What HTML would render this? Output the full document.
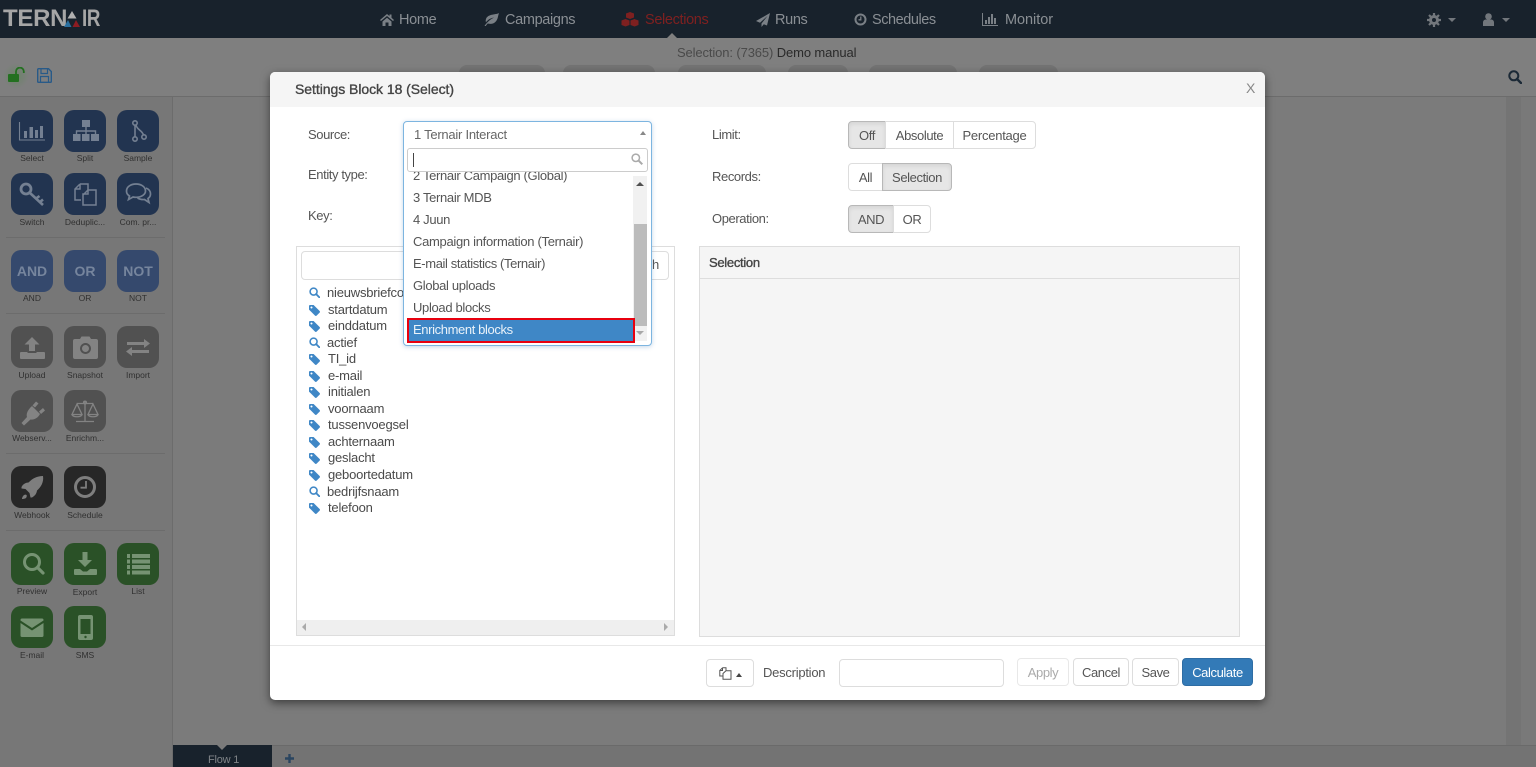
<!DOCTYPE html>
<html><head><meta charset="utf-8"><title>Ternair</title>
<style>
html,body{margin:0;padding:0;width:1536px;height:767px;overflow:hidden;background:#7c7c7c}
body{position:relative;font-family:"Liberation Sans",sans-serif;font-size:13px;letter-spacing:-.4px;color:#555}
div,span,svg{position:absolute;box-sizing:border-box}
span.t{white-space:nowrap;line-height:20px;height:20px;margin-top:1px}
span.t b,span.t i{position:static;font-style:normal;font-weight:normal}
.nav{font-size:14.5px;letter-spacing:-.35px;color:#8a8f94}
.tile{width:42px;height:42px;border-radius:10px}
.tile svg{left:0;top:0;width:42px;height:42px}
.b{background:#223450;color:#748092}
.l{background:#35496d;color:#76859d;font-weight:bold;font-size:14px;letter-spacing:0;text-align:center;line-height:42px}
.g{background:#515151;color:#838383}
.k{background:#272727;color:#7e7e7e}
.n{background:#2a5127;color:#769373}
.lab{font-size:8.5px;letter-spacing:0;color:#303030;width:60px;text-align:center;white-space:nowrap;line-height:12px;height:12px}
.sep{left:6px;width:159px;height:1px;background:#6c6c6c}
.btn{border:1px solid #ddd;background:#fff;color:#555;text-align:center;line-height:27px;white-space:nowrap}
.on{background:#e6e6e6;border-color:#b8b8b8;box-shadow:inset 0 2px 4px rgba(0,0,0,.08)}
.it{color:#555;font-size:13px}
.f{color:#4a4a4a;font-size:13px;letter-spacing:-.2px}
.d{color:#555;letter-spacing:-.33px}
.tag{width:11px;height:11px;left:309px}
</style></head><body>
<svg width="0" height="0" style="position:absolute"><defs>
<symbol id="tag" viewBox="0 0 12 12"><path fill="#3f87c6" d="M0 1.2C0 .5.5 0 1.2 0H5l6.6 6.6c.5.5.5 1.2 0 1.7l-3.3 3.3c-.5.5-1.2.5-1.7 0L0 5zM2.7 1.6a1.1 1.1 0 1 0 .01 0z"/></symbol>
<symbol id="mag" viewBox="0 0 12 12"><circle cx="5" cy="5" r="3.8" fill="none" stroke="#3f87c6" stroke-width="1.7"/><path d="M7.800 7.800l3.400 3.400" stroke="#3f87c6" stroke-width="2" stroke-linecap="round"/></symbol>
</defs></svg>

<!-- top bar -->
<div style="left:0;top:0;width:1536px;height:38px;background:#18222c"></div>
<span class="t" style="left:3px;top:7px;font-size:24px;font-weight:bold;letter-spacing:-.3px;color:#a6a6a6;line-height:22px">TERN</span>
<svg style="left:0;top:0" width="110" height="38" viewBox="0 0 110 38"><path d="M72 11l4.500 7.500h-9z" fill="#b0b0b0"/><path d="M68 20l3.500 7H64z" fill="#2a6f9f"/><path d="M76 20l4 7h-7.500z" fill="#8c1c22"/></svg>
<span class="t" style="left:82px;top:7px;font-size:24px;font-weight:bold;letter-spacing:-.4px;color:#a6a6a6;line-height:22px;transform:scaleX(.78);transform-origin:0 0">IR</span>

<svg style="left:380px;top:13px" width="14" height="13" viewBox="0 0 14 13"><path fill="#7a8086" d="M7 1L0 7l1 1 6-5 6 5 1-1-2.500-2.200V1.500h-2v1.600zM2.500 8.500L7 4.700l4.500 3.800V13H8.500V9.500h-3V13h-3z"/></svg>
<span class="t nav" style="left:399px;top:9px">Home</span>
<svg style="left:484px;top:13px" width="15" height="13" viewBox="0 0 15 13"><path fill="#7a8086" d="M15 0C12 2 4 .5 2 6c-.5 1.500-.3 2.500 0 3.300C4 6.500 7 5 10 4.500 7 6 3.500 8.500.5 13h1.300c.6-1 1.300-2 2-2.500 6 1.500 9-2 10-6 .3-1.500.7-3 1.200-4.500z"/></svg>
<span class="t nav" style="left:505px;top:9px">Campaigns</span>
<svg style="left:621px;top:12px" width="18" height="15" viewBox="0 0 18 15"><g fill="#7e2020"><path d="M9 0l4 1.500v4L9 7 5 5.500v-4z"/><path d="M4.500 7l4 1.500v4.500l-4 1.500-4-1.500V8.500z"/><path d="M13.500 7l4 1.500v4.500l-4 1.500-4-1.500V8.500z"/></g></svg>
<span class="t nav" style="left:645px;top:9px;color:#7e2020">Selections</span>
<svg style="left:756px;top:13px" width="14" height="14" viewBox="0 0 14 14"><path fill="#7a8086" d="M14 0L0 8l4 1.700L11.500 3 5.500 10.500V14l2.300-2.800L11 12.500z"/></svg>
<span class="t nav" style="left:775px;top:9px">Runs</span>
<svg style="left:854px;top:13px" width="13" height="13" viewBox="0 0 13 13"><circle cx="6.500" cy="6.500" r="5" fill="none" stroke="#7a8086" stroke-width="2"/><path d="M6.800 3.500v3.300H4.500" fill="none" stroke="#7a8086" stroke-width="1.300"/></svg>
<span class="t nav" style="left:872px;top:9px;letter-spacing:-.45px">Schedules</span>
<svg style="left:982px;top:13px" width="16" height="13" viewBox="0 0 16 13"><path fill="#7a8086" d="M0 0h1v12h15v1H0zM3 7h2v4H3zM6 4h2v7H6zM9 1h2v10H9zM12 5h2v6h-2z"/></svg>
<span class="t nav" style="left:1005px;top:9px;letter-spacing:-.05px">Monitor</span>
<div style="left:667px;top:33px;width:0;height:0;border:5px solid transparent;border-top:0;border-bottom:5px solid #7f7f7f"></div>

<svg style="left:1427px;top:13px" width="14" height="14" viewBox="0 0 14 14"><circle cx="7" cy="7" r="3.500" fill="none" stroke="#72777c" stroke-width="3"/><path d="M7 0v3M7 11v3M0 7h3M11 7h3M2 2l2 2M10 10l2 2M12 2l-2 2M4 10l-2 2" stroke="#72777c" stroke-width="2.200"/></svg>
<div style="left:1448px;top:18px;width:0;height:0;border:4px solid transparent;border-bottom:0;border-top:4px solid #72777c"></div>
<svg style="left:1483px;top:13px" width="11" height="13" viewBox="0 0 11 13"><circle cx="5.500" cy="3.500" r="3.300" fill="#72777c"/><path d="M0 13V9.500C0 7.500 1.500 6.500 3 6.500h5c1.500 0 3 1 3 3V13z" fill="#72777c"/></svg>
<div style="left:1502px;top:18px;width:0;height:0;border:4px solid transparent;border-bottom:0;border-top:4px solid #72777c"></div>

<!-- sub header -->
<div style="left:0;top:38px;width:1536px;height:58px;background:#7f7f7f"></div>
<div style="left:0;top:96px;width:1536px;height:1px;background:#6c6c6c"></div>
<span class="t" style="left:677px;top:42px;color:#4a4a4a;letter-spacing:-.12px">Selection: (7365) <b style="color:#2a2a2a">Demo manual</b></span>
<div style="left:459px;top:65px;width:86px;height:8px;background:#737373;border-radius:8px 8px 0 0"></div>
<div style="left:563px;top:65px;width:92px;height:8px;background:#737373;border-radius:8px 8px 0 0"></div>
<div style="left:678px;top:65px;width:88px;height:8px;background:#737373;border-radius:8px 8px 0 0"></div>
<div style="left:788px;top:65px;width:60px;height:8px;background:#737373;border-radius:8px 8px 0 0"></div>
<div style="left:869px;top:65px;width:88px;height:8px;background:#737373;border-radius:8px 8px 0 0"></div>
<div style="left:979px;top:65px;width:79px;height:8px;background:#737373;border-radius:8px 8px 0 0"></div>

<div style="left:3px;top:63px;width:26px;height:26px;border-radius:50%;background:radial-gradient(circle,rgba(60,140,50,.3),rgba(60,140,50,0) 70%)"></div>
<svg style="left:8px;top:67px" width="17" height="15" viewBox="0 0 17 15"><rect x="0" y="7" width="11" height="8" rx="1" fill="#237020"/><path d="M8 7V4.500a3.500 3.500 0 0 1 7.800 0V6" fill="none" stroke="#237020" stroke-width="1.800"/></svg>
<svg style="left:37px;top:68px" width="15" height="15" viewBox="0 0 15 15"><path d="M1.500.7h10l2.800 2.800v10a.8.800 0 0 1-.8.800h-12a.8.800 0 0 1-.8-.8V1.500a.8.800 0 0 1 .8-.8z" fill="none" stroke="#285a88" stroke-width="1.400"/><path d="M4 1v4.500h6.500V1M3.500 14V8.500h8V14" fill="none" stroke="#285a88" stroke-width="1.200"/></svg>
<svg style="left:1508px;top:70px" width="14" height="14" viewBox="0 0 14 14"><circle cx="5.800" cy="5.800" r="4.500" fill="none" stroke="#1b2936" stroke-width="2"/><path d="M9 9l4 4" stroke="#1b2936" stroke-width="2.400" stroke-linecap="round"/></svg>

<!-- body areas -->
<div style="left:0;top:97px;width:172px;height:670px;background:#777"></div>
<div style="left:172px;top:97px;width:1px;height:670px;background:#6c6c6c"></div>
<div style="left:173px;top:97px;width:1333px;height:648px;background:#7b7b7b"></div>
<div style="left:1506px;top:97px;width:15px;height:648px;background:#747474"></div>
<div style="left:1521px;top:97px;width:15px;height:648px;background:#797979"></div>
<div style="left:173px;top:745px;width:1363px;height:22px;background:#737373;border-top:1px solid #6a6a6a"></div>
<div style="left:173px;top:745px;width:99px;height:22px;background:#18222c"></div>
<div style="left:217px;top:745px;width:0;height:0;border:5px solid transparent;border-bottom:0;border-top:5px solid #7b7b7b"></div>
<span class="t" style="left:208px;top:749px;color:#7f8387;font-size:11px;letter-spacing:-.2px">Flow 1</span>
<svg style="left:285px;top:754px" width="9" height="9" viewBox="0 0 9 9"><path d="M4.500 0v9M0 4.500h9" stroke="#2a4560" stroke-width="2.400"/></svg>

<!-- tiles -->
<div class="tile b" style="left:11px;top:110px"><svg viewBox="0 0 42 42"><path d="M8.500 12v18H34" fill="none" stroke="currentColor" stroke-width="1.100"/><path fill="currentColor" d="M13 21h3v7h-3zM18.500 17H22v11h-3.500zM24 20h3v8h-3zM29 16h3v12h-3z"/></svg></div>
<div class="lab" style="left:2px;top:152px">Select</div>
<div class="tile b" style="left:64px;top:110px"><svg viewBox="0 0 42 42"><path fill="currentColor" d="M18 10h8v7h-8zM9 24h7.500v7H9zM18 24h7.500v7H18zM27 24h8v7h-8z"/><path d="M22 17v4M12.500 24v-3h19v3M22 21v3" fill="none" stroke="currentColor" stroke-width="1.400"/></svg></div>
<div class="lab" style="left:55px;top:152px">Split</div>
<div class="tile b" style="left:117px;top:110px"><svg viewBox="0 0 42 42"><g fill="none" stroke="currentColor" stroke-width="1.600"><circle cx="18" cy="13" r="2.200"/><circle cx="18" cy="29" r="2.200"/><circle cx="27" cy="27" r="2.200"/><path d="M18 15.200v11.600M19 15c1 5 6 5 7.500 10"/></g></svg></div>
<div class="lab" style="left:108px;top:152px">Sample</div>

<div class="tile b" style="left:11px;top:173px"><svg viewBox="0 0 42 42"><circle cx="15" cy="16" r="5" fill="none" stroke="currentColor" stroke-width="2.800"/><path d="M19 20l13 12M25 25.500l3.500-2.500M29 29l3-2.500" fill="none" stroke="currentColor" stroke-width="2.600"/></svg></div>
<div class="lab" style="left:2px;top:216px">Switch</div>
<div class="tile b" style="left:64px;top:173px"><svg viewBox="0 0 42 42"><g fill="none" stroke="currentColor" stroke-width="1.500"><path d="M16 11h8v6M16 11l-5 5v11h6"/><path d="M24 17h8v15H19V22zM19 22v-1h5v-4"/><path d="M16 11v5h-5"/></g></svg></div>
<div class="lab" style="left:55px;top:216px">Deduplic...</div>
<div class="tile b" style="left:117px;top:173px"><svg viewBox="0 0 42 42"><g fill="none" stroke="currentColor" stroke-width="1.700"><path d="M19 11c-5.500 0-9.500 3-9.500 7 0 2 1 3.800 3 5l-1 3.500 4.500-2.500c1 .2 2 .3 3 .3 5.500 0 9.500-3 9.500-6.300 0-4-4-7-9.500-7z"/><path d="M29 15c2.500 1 4.500 3 4.500 6 0 2-1 3.500-2.500 4.500l1 4-4.500-3c-2.500.2-5-.3-7-1.500"/></g></svg></div>
<div class="lab" style="left:108px;top:216px">Com. pr...</div>
<div class="sep" style="top:237px"></div>

<div class="tile l" style="left:11px;top:250px">AND</div><div class="lab" style="left:2px;top:292px">AND</div>
<div class="tile l" style="left:64px;top:250px">OR</div><div class="lab" style="left:55px;top:292px">OR</div>
<div class="tile l" style="left:117px;top:250px">NOT</div><div class="lab" style="left:108px;top:292px">NOT</div>
<div class="sep" style="top:313px"></div>

<div class="tile g" style="left:11px;top:326px"><svg viewBox="0 0 42 42"><path fill="currentColor" d="M21 11l7.500 7.500h-4.500V25h-6v-6.500H13.500zM10 26h6.500v1h9v-1H33a1 1 0 0 1 1 1v5a1 1 0 0 1-1 1H10a1 1 0 0 1-1-1v-5a1 1 0 0 1 1-1z"/></svg></div>
<div class="lab" style="left:2px;top:369px">Upload</div>
<div class="tile g" style="left:64px;top:326px"><svg viewBox="0 0 42 42"><path fill="currentColor" fill-rule="evenodd" d="M16 13l1.500-2.500h8L27 13h5a2 2 0 0 1 2 2v16a2 2 0 0 1-2 2H11a2 2 0 0 1-2-2V15a2 2 0 0 1 2-2zM21.500 17a5.500 5.500 0 1 0 .01 0zM21.500 19a3.500 3.500 0 1 1-.01 0z"/></svg></div>
<div class="lab" style="left:55px;top:369px">Snapshot</div>
<div class="tile g" style="left:117px;top:326px"><svg viewBox="0 0 42 42"><path fill="currentColor" d="M10 16h17v-3l6 4.500-6 4.500v-3H10zM32 24H15v-3l-6 4.500 6 4.500v-3h17z"/></svg></div>
<div class="lab" style="left:108px;top:369px">Import</div>

<div class="tile g" style="left:11px;top:390px"><svg viewBox="0 0 42 42"><path fill="currentColor" d="M21 16l8 8c-2 4-6 6-9.500 5.500L13 35.500 10.500 33l5.500-6c-1-3 .5-7 5-11zM25 11.500l2.500 2-3.500 4-2.500-2zM32 18l2 2.500-4 3.500-2-2.500z"/></svg></div>
<div class="lab" style="left:2px;top:432px">Webserv...</div>
<div class="tile g" style="left:64px;top:390px"><svg viewBox="0 0 42 42"><g fill="none" stroke="currentColor" stroke-width="1.300"><path d="M21 11v20M12 31.500h18M13 13.500h16"/><circle cx="21" cy="12.500" r="1.400"/><path d="M13 14l-5 10.500h10zM29 14l-5 10.500h10z"/><path d="M8 24.500c1 3 9 3 10 0M24 24.500c1 3 9 3 10 0"/></g></svg></div>
<div class="lab" style="left:55px;top:432px">Enrichm...</div>
<div class="sep" style="top:453px"></div>

<div class="tile k" style="left:11px;top:466px"><svg viewBox="0 0 42 42"><path fill="currentColor" d="M32 10c1 6-2 11-6 14.500-.3 2.500-1.500 5-5 7l-1.500 0-1-4.500-4-4-4-.5v-1.500c1.500-3 4.500-4.500 7-4.500C21.500 12.500 26 10 32 10zM12.500 29.500c1-1 2.500-1 3-.5s.3 2-.5 3c-1 .8-3 1-4 1 0-1 .5-2.500 1.500-3.500z"/></svg></div>
<div class="lab" style="left:2px;top:509px">Webhook</div>
<div class="tile k" style="left:64px;top:466px"><svg viewBox="0 0 42 42"><circle cx="21" cy="21" r="9.500" fill="none" stroke="currentColor" stroke-width="3"/><path d="M22 15v6.700h-5.500" fill="none" stroke="currentColor" stroke-width="1.800"/></svg></div>
<div class="lab" style="left:55px;top:509px">Schedule</div>
<div class="sep" style="top:530px"></div>

<div class="tile n" style="left:11px;top:543px"><svg viewBox="0 0 42 42"><circle cx="21" cy="19" r="7.500" fill="none" stroke="currentColor" stroke-width="3"/><path d="M26.500 24.500l5.500 5.500" stroke="currentColor" stroke-width="3.200" stroke-linecap="round"/></svg></div>
<div class="lab" style="left:2px;top:585px">Preview</div>
<div class="tile n" style="left:64px;top:543px"><svg viewBox="0 0 42 42"><path fill="currentColor" d="M18.500 9h5v8h4.500l-7 7-7-7h4.500zM11 26h5l3 2.500h4l3-2.500h6a1 1 0 0 1 1 1v4a1 1 0 0 1-1 1H11a1 1 0 0 1-1-1v-4a1 1 0 0 1 1-1z"/></svg></div>
<div class="lab" style="left:55px;top:586px">Export</div>
<div class="tile n" style="left:117px;top:543px"><svg viewBox="0 0 42 42"><path fill="currentColor" d="M10 11h3v4h-3zM15 11h18v4H15zM10 16.500h3v4h-3zM15 16.500h18v4H15zM10 22h3v4h-3zM15 22h18v4H15zM10 27.500h3v4h-3zM15 27.500h18v4H15z"/></svg></div>
<div class="lab" style="left:108px;top:585px">List</div>

<div class="tile n" style="left:11px;top:606px"><svg viewBox="0 0 42 42"><path fill="currentColor" d="M11 12.500h20a1.500 1.500 0 0 1 1.500 1.500v.5L21 22 9.500 14.500V14a1.500 1.500 0 0 1 1.500-1.500zM9.500 17L21 24.500 32.500 17v12.500A1.500 1.500 0 0 1 31 31H11a1.500 1.500 0 0 1-1.500-1.500z"/></svg></div>
<div class="lab" style="left:2px;top:649px">E-mail</div>
<div class="tile n" style="left:64px;top:606px"><svg viewBox="0 0 42 42"><path fill="currentColor" fill-rule="evenodd" d="M16 9h11a2 2 0 0 1 2 2v21a2 2 0 0 1-2 2H16a2 2 0 0 1-2-2V11a2 2 0 0 1 2-2zM16.500 13v15h10V13zM21.500 29.800a1.200 1.200 0 1 0 .01 0z"/></svg></div>
<div class="lab" style="left:55px;top:649px">SMS</div>

<!-- modal -->
<div style="left:270px;top:72px;width:995px;height:628px;background:#fff;border-radius:5px;box-shadow:0 3px 9px rgba(0,0,0,.5)"></div>
<div style="left:270px;top:72px;width:995px;height:35px;background:#f5f5f5;border-radius:5px 5px 0 0"></div>
<span class="t" style="left:295px;top:78px;font-size:14px;letter-spacing:-.05px;color:#444;-webkit-text-stroke:.35px #444">Settings Block 18 (Select)</span>
<span class="t" style="left:1246px;top:77px;font-size:14px;color:#888;letter-spacing:0">X</span>

<span class="t it" style="left:308px;top:124px">Source:</span>
<span class="t it" style="left:308px;top:164px">Entity type:</span>
<span class="t it" style="left:308px;top:205px">Key:</span>
<span class="t it" style="left:712px;top:124px">Limit:</span>
<span class="t it" style="left:712px;top:166px">Records:</span>
<span class="t it" style="left:712px;top:208px">Operation:</span>

<!-- button groups -->
<div class="btn on" style="left:848px;top:121px;width:38px;height:28px;border-radius:4px 0 0 4px">Off</div>
<div class="btn" style="left:885px;top:121px;width:69px;height:28px">Absolute</div>
<div class="btn" style="left:953px;top:121px;width:83px;height:28px;border-radius:0 4px 4px 0;letter-spacing:-.25px">Percentage</div>
<div class="btn" style="left:848px;top:163px;width:35px;height:28px;border-radius:4px 0 0 4px">All</div>
<div class="btn on" style="left:882px;top:163px;width:70px;height:28px;border-radius:0 4px 4px 0">Selection</div>
<div class="btn on" style="left:848px;top:205px;width:46px;height:28px;border-radius:4px 0 0 4px">AND</div>
<div class="btn" style="left:893px;top:205px;width:38px;height:28px;border-radius:0 4px 4px 0">OR</div>

<!-- left panel -->
<div style="left:296px;top:246px;width:379px;height:390px;border:1px solid #ddd;background:#fff"></div>
<div style="left:301px;top:251px;width:368px;height:29px;border:1px solid #ddd;border-radius:4px;background:#fff"></div>
<span class="t" style="left:652px;top:254px;color:#555">h</span>
<div style="left:297px;top:620px;width:377px;height:15px;background:#efefef"></div>
<div style="left:302px;top:623px;width:0;height:0;border:4px solid transparent;border-left:0;border-right:4px solid #aaa"></div>
<div style="left:664px;top:623px;width:0;height:0;border:4px solid transparent;border-right:0;border-left:4px solid #aaa"></div>

<svg class="tag" style="top:287px"><use href="#mag"/></svg><span class="t f" style="left:327px;top:282px">nieuwsbriefco</span>
<svg class="tag" style="top:305px"><use href="#tag"/></svg><span class="t f" style="left:328px;top:299px">startdatum</span>
<svg class="tag" style="top:321px"><use href="#tag"/></svg><span class="t f" style="left:328px;top:315px">einddatum</span>
<svg class="tag" style="top:337px"><use href="#mag"/></svg><span class="t f" style="left:327px;top:332px">actief</span>
<svg class="tag" style="top:354px"><use href="#tag"/></svg><span class="t f" style="left:328px;top:348px">TI_id</span>
<svg class="tag" style="top:371px"><use href="#tag"/></svg><span class="t f" style="left:328px;top:365px">e-mail</span>
<svg class="tag" style="top:387px"><use href="#tag"/></svg><span class="t f" style="left:328px;top:381px">initialen</span>
<svg class="tag" style="top:404px"><use href="#tag"/></svg><span class="t f" style="left:328px;top:398px">voornaam</span>
<svg class="tag" style="top:420px"><use href="#tag"/></svg><span class="t f" style="left:328px;top:414px">tussenvoegsel</span>
<svg class="tag" style="top:437px"><use href="#tag"/></svg><span class="t f" style="left:328px;top:431px">achternaam</span>
<svg class="tag" style="top:453px"><use href="#tag"/></svg><span class="t f" style="left:328px;top:447px">geslacht</span>
<svg class="tag" style="top:470px"><use href="#tag"/></svg><span class="t f" style="left:328px;top:464px">geboortedatum</span>
<svg class="tag" style="top:486px"><use href="#mag"/></svg><span class="t f" style="left:327px;top:481px">bedrijfsnaam</span>
<svg class="tag" style="top:503px"><use href="#tag"/></svg><span class="t f" style="left:328px;top:497px">telefoon</span>

<!-- right panel -->
<div style="left:699px;top:246px;width:541px;height:391px;border:1px solid #ddd;background:#f5f5f5"></div>
<div style="left:700px;top:278px;width:539px;height:1px;background:#ddd"></div>
<span class="t" style="left:709px;top:252px;color:#444;font-size:13px;letter-spacing:-.3px;-webkit-text-stroke:.35px #444">Selection</span>

<!-- dropdown -->
<div style="left:403px;top:121px;width:249px;height:225px;background:#fff;border:1px solid #7db5e0;border-radius:4px;box-shadow:0 1px 5px rgba(60,120,180,.3)"></div>
<span class="t it" style="left:414px;top:124px;color:#666;letter-spacing:-.25px">1 Ternair Interact</span>
<div style="left:640px;top:131px;width:0;height:0;border:3px solid transparent;border-top:0;border-bottom:4px solid #888"></div>
<div style="left:404px;top:171px;width:229px;height:148px;overflow:hidden">
<span class="t d" style="left:9px;top:-6px">2 Ternair Campaign (Global)</span>
<span class="t d" style="left:9px;top:16px">3 Ternair MDB</span>
<span class="t d" style="left:9px;top:38px">4 Juun</span>
<span class="t d" style="left:9px;top:60px;letter-spacing:-.3px">Campaign information (Ternair)</span>
<span class="t d" style="left:9px;top:82px;letter-spacing:-.38px">E-mail statistics (Ternair)</span>
<span class="t d" style="left:9px;top:104px">Global uploads</span>
<span class="t d" style="left:9px;top:126px">Upload blocks</span>
</div>
<div style="left:407px;top:148px;width:241px;height:24px;border:1px solid #ccc;border-radius:3px;background:#fff"></div>
<div style="left:413px;top:153px;width:1px;height:14px;background:#444"></div>
<svg style="left:631px;top:153px" width="12" height="12" viewBox="0 0 12 12"><circle cx="4.800" cy="4.800" r="3.700" fill="none" stroke="#aaa" stroke-width="1.500"/><path d="M7.500 7.500l3.800 3.800" stroke="#aaa" stroke-width="2"/></svg>
<div style="left:633px;top:176px;width:14px;height:165px;background:#f1f1f1"></div>
<div style="left:634px;top:224px;width:13px;height:102px;background:#bcbcbc"></div>
<div style="left:636px;top:182px;width:0;height:0;border:4px solid transparent;border-top:0;border-bottom:4px solid #505050"></div>
<div style="left:636px;top:331px;width:0;height:0;border:4px solid transparent;border-bottom:0;border-top:4px solid #a8a8a8"></div>
<div style="left:407px;top:318px;width:228px;height:25px;background:#3f87c6;border:2px solid #e8000f"></div>
<span class="t" style="left:413px;top:319px;color:#eaf2f9;letter-spacing:-.38px">Enrichment blocks</span>

<!-- footer -->
<div style="left:270px;top:645px;width:995px;height:1px;background:#e8e8e8"></div>
<div class="btn" style="left:706px;top:659px;width:48px;height:28px;border-radius:4px"></div>
<svg style="left:719px;top:667px" width="13" height="13" viewBox="0 0 13 13"><g fill="none" stroke="#555" stroke-width="1"><path d="M3.500.8h3.500v3M3.500.8L.8 3.500V9h3"/><path d="M7 3.800h5v8.500H4V6.500zM3.500.8v2.700H.8"/></g></svg>
<div style="left:736px;top:673px;width:0;height:0;border:3.500px solid transparent;border-top:0;border-bottom:4px solid #444"></div>
<span class="t it" style="left:763px;top:662px;letter-spacing:-.25px">Description</span>
<div style="left:839px;top:659px;width:165px;height:28px;border:1px solid #ddd;border-radius:4px;background:#fff"></div>
<div class="btn" style="left:1017px;top:658px;width:52px;height:28px;border-radius:4px;color:#aaa;border-color:#e8e8e8">Apply</div>
<div class="btn" style="left:1073px;top:658px;width:56px;height:28px;border-radius:4px">Cancel</div>
<div class="btn" style="left:1132px;top:658px;width:47px;height:28px;border-radius:4px">Save</div>
<div class="btn" style="left:1182px;top:658px;width:71px;height:28px;border-radius:4px;background:#337ab7;border-color:#2e6da4;color:#fff">Calculate</div>
</body></html>
